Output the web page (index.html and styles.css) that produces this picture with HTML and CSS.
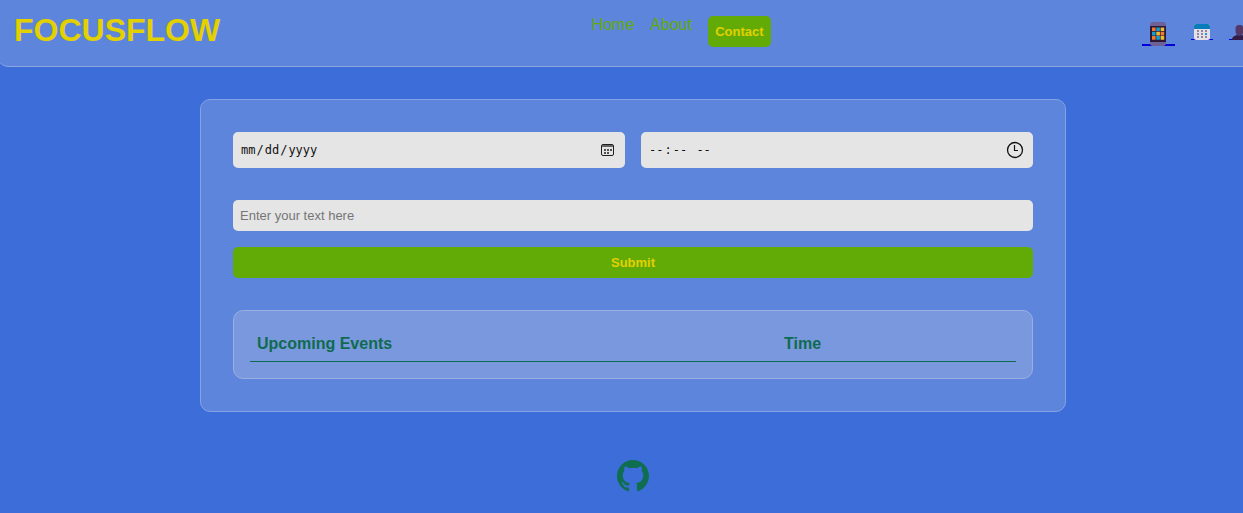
FILE: index.html
```html
<!DOCTYPE html>
<html lang="en">
<head>
<meta charset="utf-8">
<meta name="viewport" content="width=device-width, initial-scale=1">
<title>FocusFlow</title>
<link rel="stylesheet" href="styles.css">
</head>
<body>
<div class="page">
  <header class="header">
    <h1 class="logo">FOCUSFLOW</h1>
    <nav class="nav">
      <a class="nav-link" href="#home">Home</a>
      <a class="nav-link" href="#about">About</a>
      <button class="button button-compact" type="button">Contact</button>
    </nav>
    <div class="tools">
      <a class="tool tool-large" href="#apps" aria-label="Apps">
        <svg width="16" height="24" viewBox="0 0 16 24">
          <rect width="16" height="24" rx="3" fill="#6d6197"/>
          <path d="M0 4h16v16H0z" fill="#2b1935"/>
          <path d="M2 5.500h3.600v3.600H2zM10.600 9.800h3.600v3.600h-3.600zM2 14.100h3.600v3.600H2z" fill="#f07a2b"/>
          <path d="M6.300 5.500h3.600v3.600H6.300zM2 9.800h3.600v3.600H2zM6.300 14.100h3.600v3.600H6.300z" fill="#159bd3"/>
          <path d="M10.600 5.500h3.600v3.600h-3.600zM6.300 9.800h3.600v3.600H6.300zM10.600 14.100h3.600v3.600h-3.600z" fill="#e9bd35"/>
        </svg>
      </a>
      <a class="tool" href="#calendar" aria-label="Calendar">
        <svg width="16" height="16" viewBox="0 0 16 16">
          <rect width="16" height="16" rx="2.500" fill="#e4e0ea"/>
          <path d="M0 5V2.500A2.500 2.500 0 0 1 2.500 0h11A2.500 2.500 0 0 1 16 2.500V5z" fill="#087cb9"/>
          <path d="M3 6h2v2H3zM7 6h2v2H7zM11 6h2v2h-2zM3 9h2v2H3zM7 9h2v2H7zM3 12h2v2H3zM7 12h2v2H7zM11 12h2v2h-2z" fill="#92879f"/>
          <path d="M11 9h2v2h-2z" fill="#159bd3"/>
        </svg>
      </a>
      <a class="tool" href="#profile" aria-label="Profile">
        <svg width="16" height="16" viewBox="0 0 16 16">
          <path d="M0 16c0-3 2-4 5-5V9h5v2c3 1 5 2 5 5z" fill="#321b45"/>
          <path d="M7.500 1c3.500 0 4 2 4 5s-1 6-4 6-4-3-4-6 .5-5 4-5z" fill="#533768"/>
        </svg>
      </a>
    </div>
  </header>

  <main class="card">
    <form class="form">
      <div class="when">
        <div class="field">
          <input class="input picker" type="date" aria-label="Date">
          <svg class="field-icon" width="16" height="16" viewBox="0 0 16 16" fill="none" stroke="#202020">
            <rect x="1.500" y="2.500" width="12" height="11" rx="1.500"/>
            <path d="M2 4h11" stroke-width="2" stroke="#666"/>
            <path d="M4 8h2M7 8h2M10 8h2M4 11h2M7 11h2" stroke-width="1.600"/>
          </svg>
        </div>
        <div class="field">
          <input class="input picker" type="time" aria-label="Time">
          <svg class="field-icon" width="18" height="18" viewBox="0 0 18 18" fill="none" stroke="#111">
            <circle cx="9" cy="9" r="7.500" stroke-width="1.300"/>
            <path d="M8.500 4v5.500H12" stroke-width="1.200"/>
          </svg>
        </div>
      </div>
      <input class="input" type="text" placeholder="Enter your text here" aria-label="Event text">
      <button class="button" type="submit">Submit</button>
    </form>
    <div class="events">
      <table class="table">
        <thead>
          <tr><th class="event-name" scope="col">Upcoming Events</th><th scope="col">Time</th></tr>
        </thead>
      </table>
    </div>
  </main>

  <footer class="footer">
    <a class="github" href="#github" aria-label="GitHub">
      <svg width="32" height="32" viewBox="0 0 16 16" fill="currentColor">
        <path d="M8 0C3.58 0 0 3.58 0 8c0 3.54 2.29 6.53 5.47 7.59.4.07.55-.17.55-.38 0-.19-.01-.82-.01-1.49-2.01.37-2.53-.49-2.69-.94-.09-.23-.48-.94-.82-1.13-.28-.15-.68-.52-.01-.53.63-.01 1.08.58 1.23.82.72 1.21 1.87.87 2.33.66.07-.52.28-.87.51-1.07-1.78-.2-3.64-.89-3.64-3.95 0-.87.31-1.59.82-2.15-.08-.2-.36-1.02.08-2.12 0 0 .67-.21 2.2.82.64-.18 1.32-.27 2-.27s1.36.09 2 .27c1.53-1.04 2.2-.82 2.2-.82.44 1.1.16 1.92.08 2.12.51.56.82 1.27.82 2.15 0 3.07-1.87 3.75-3.65 3.95.29.25.54.73.54 1.48 0 1.07-.01 1.93-.01 2.2 0 .21.15.46.55.38A8.01 8.01 0 0 0 16 8c0-4.42-3.58-8-8-8z"/>
      </svg>
    </a>
  </footer>
</div>
</body>
</html>
```
FILE: styles.css
```css
* {
  box-sizing: border-box;
}

body {
  margin: 0;
  overflow-x: hidden;
  background: #3d6dd9;
  color: #0f6b50;
  font: 16px/18px "Liberation Sans", Arial, sans-serif;
}

/* The page runs a little past the right edge of the window. */
.page {
  width: calc(100% + 23px);
}

.header {
  display: flex;
  justify-content: space-between;
  align-items: flex-start;
  margin: 0 -2px 32px;
  padding: 12px 17px 18px 16px;
  background: #5d85db;
  border-bottom: 1px solid #8ba5e2;
  border-radius: 0 0 10px 10px;
}

.logo {
  margin: 0;
  color: #e3d000;
  font-size: 32px;
  line-height: 36px;
}

.nav {
  display: flex;
  align-items: flex-start;
  gap: 16px;
  padding-top: 4px;
}

.nav-link {
  color: #62ab07;
  text-decoration: none;
}

.button {
  padding: 8px;
  border: 0;
  border-radius: 5px;
  background: #62ab07;
  color: #e3d000;
  font: bold 13px/15px "Liberation Sans", Arial, sans-serif;
}

.button-compact {
  padding: 8px 7px;
}

.tools {
  display: flex;
  gap: 16px;
  padding-top: 10px;
}

.tool {
  display: flex;
  align-self: flex-start;
  justify-content: center;
  width: 22px;
  padding-top: 2px;
  background: linear-gradient(#0000d8, #0000d8) bottom / 100% 1px no-repeat;
}

.tool-large {
  width: 33px;
  padding: 0;
  background-size: 100% 2px;
}

.card {
  width: 866px;
  max-width: 100%;
  margin: 0 auto;
  padding: 32px;
  background: #5d85db;
  border: 1px solid #84a2e5;
  border-radius: 10px;
}

.form {
  display: flex;
  flex-direction: column;
  gap: 16px;
}

.when {
  display: grid;
  grid-template-columns: 1fr 1fr;
  gap: 16px;
  margin-bottom: 16px;
}

.field {
  position: relative;
}

.input {
  display: block;
  width: 100%;
  padding: 8px 7px;
  border: 0;
  border-radius: 5px;
  background: #e5e5e5;
  color: #111;
  font: 13px/15px "Liberation Sans", Arial, sans-serif;
}

.input::placeholder {
  color: #757575;
}

.picker {
  height: 36px;
  font-family: "DejaVu Sans Mono", monospace;
  font-size: 12px;
}

.picker::-webkit-calendar-picker-indicator {
  opacity: 0;
}

.field-icon {
  position: absolute;
  top: 50%;
  right: 9px;
  transform: translateY(-50%);
  pointer-events: none;
}

.events {
  margin-top: 32px;
  padding: 16px;
  background: #7a98dd;
  border: 1px solid #9bafe4;
  border-radius: 10px;
}

.table {
  width: 100%;
  border-collapse: collapse;
}

.table th {
  padding: 8px;
  border-bottom: 1px solid #0f6b50;
  text-align: left;
}

.table .event-name {
  width: 526px;
  padding-left: 7px;
}

.footer {
  display: flex;
  justify-content: center;
  padding: 48px 0 20px;
}

.github {
  display: flex;
  color: #0f6e50;
}
```
